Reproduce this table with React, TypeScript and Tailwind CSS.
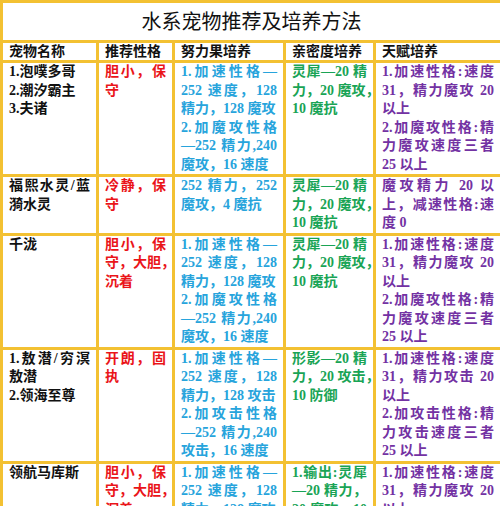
import React from "react";

// each cell: colour class + paragraphs, each paragraph a list of rendered lines
type Cell = { color: string; paras: string[][] };

const BLACK = "text-[#111111]";
const RED = "text-[#ea1419]";
const BLUE = "text-[#27a4dc]";
const GREEN = "text-[#19a455]";
const PURPLE = "text-[#7332a3]";

const HEADERS = ["宠物名称", "推荐性格", "努力果培养", "亲密度培养", "天赋培养"];

const magicEv: string[][] = [
  ["1.加速性格—", "252 速度，128", "精力，128 魔攻"],
  ["2.加魔攻性格", "—252 精力,240", "魔攻，16 速度"],
];

const magicTalent: string[][] = [
  ["1.加速性格:速度", "31，精力魔攻 20", "以上"],
  ["2.加魔攻性格:精", "力魔攻速度三者", "25 以上"],
];

const lingxi: string[][] = [["灵犀—20 精", "力，20 魔攻，", "10 魔抗"]];

const ROWS: Cell[][] = [
  [
    { color: BLACK, paras: [["1.泡噗多哥"], ["2.潮汐霸主"], ["3.夫诸"]] },
    { color: RED, paras: [["胆小，保", "守"]] },
    { color: BLUE, paras: magicEv },
    { color: GREEN, paras: lingxi },
    { color: PURPLE, paras: magicTalent },
  ],
  [
    { color: BLACK, paras: [["福熙水灵/蓝", "漪水灵"]] },
    { color: RED, paras: [["冷静，保", "守"]] },
    { color: BLUE, paras: [["252 精力，252", "魔攻，4 魔抗"]] },
    { color: GREEN, paras: lingxi },
    { color: PURPLE, paras: [["魔攻精力 20 以", "上，减速性格:速", "度 0"]] },
  ],
  [
    { color: BLACK, paras: [["千泷"]] },
    { color: RED, paras: [["胆小，保", "守，大胆，", "沉着"]] },
    { color: BLUE, paras: magicEv },
    { color: GREEN, paras: lingxi },
    { color: PURPLE, paras: magicTalent },
  ],
  [
    { color: BLACK, paras: [["1.敖潜/穷溟", "敖潜"], ["2.领海至尊"]] },
    { color: RED, paras: [["开朗，固", "执"]] },
    {
      color: BLUE,
      paras: [
        ["1.加速性格—", "252 速度，128", "精力，128 攻击"],
        ["2.加攻击性格", "—252 精力,240", "攻击，16 速度"],
      ],
    },
    { color: GREEN, paras: [["形影—20 精", "力，20 攻击，", "10 防御"]] },
    {
      color: PURPLE,
      paras: [
        ["1.加速性格:速度", "31，精力攻击 20", "以上"],
        ["2.加攻击性格:精", "力攻击速度三者", "25 以上"],
      ],
    },
  ],
  [
    { color: BLACK, paras: [["领航马库斯"]] },
    { color: RED, paras: [["胆小，保", "守，大胆，", "沉着"]] },
    { color: BLUE, paras: magicEv },
    { color: GREEN, paras: [["1.输出:灵犀", "—20 精力，", "20 魔攻，10", "魔抗"]] },
    { color: PURPLE, paras: magicTalent },
  ],
];

function CellText({ paras }: { paras: string[][] }) {
  return (
    <>
      {paras.map((lines, p) => (
        <div key={p}>
          {lines.map((line, i) => (
            <div
              key={i}
              className={
                i < lines.length - 1 ? "text-justify [text-align-last:justify] whitespace-nowrap" : "whitespace-nowrap"
              }
            >
              {line}
            </div>
          ))}
        </div>
      ))}
    </>
  );
}

export default function App() {
  return (
    <div
      className="w-[500px] h-[506px] overflow-hidden bg-white"
      style={{ fontFamily: '"Liberation Serif", "Noto Sans CJK SC", serif' }}
    >
      <table className="w-[500px] table-fixed border-collapse border-[3px] border-[#f3c132]">
        <colgroup>
          <col className="w-[96px]" />
          <col className="w-[76px]" />
          <col className="w-[111px]" />
          <col className="w-[90px]" />
          <col className="w-[127px]" />
        </colgroup>
        <tbody>
          <tr>
            <td
              colSpan={5}
              className="h-[40px] border-[3px] border-[#f3c132] text-center text-[20px] leading-[24px] text-[#111111]"
            >
              水系宠物推荐及培养方法
            </td>
          </tr>
          <tr>
            {HEADERS.map((h) => (
              <td
                key={h}
                className="border-[3px] border-[#f3c132] px-[6px] py-0 text-[14px] leading-[17px] font-bold text-[#111111]"
              >
                {h}
              </td>
            ))}
          </tr>
          {ROWS.map((row, r) => (
            <tr key={r}>
              {row.map((cell, c) => (
                <td
                  key={c}
                  className={`border-[3px] border-[#f3c132] px-[6px] py-0 align-top text-[14px] leading-[18.5px] font-bold ${cell.color}`}
                >
                  <CellText paras={cell.paras} />
                </td>
              ))}
            </tr>
          ))}
        </tbody>
      </table>
    </div>
  );
}
